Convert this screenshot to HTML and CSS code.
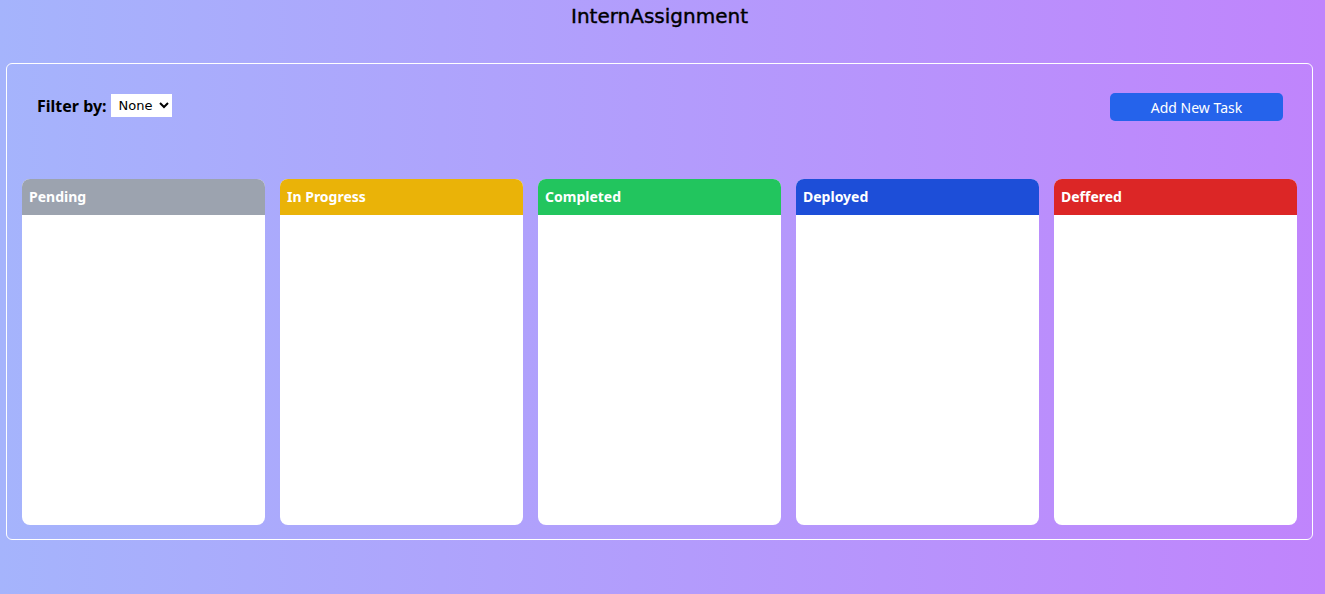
FILE: index.html
```html
<!DOCTYPE html>
<html>
<head>
<meta charset="utf-8">
<link rel="stylesheet" href="styles.css">
</head>
<body>
<h1 class="title">InternAssignment</h1>
<div class="board">
  <div class="toolbar">
    <div class="filter">
      <span class="filter-label">Filter by:</span>
      <select class="filter-select"><option>None</option></select>
    </div>
    <button class="add-btn">Add New Task</button>
  </div>
  <div class="columns">
    <div class="column"><div class="col-head pending">Pending</div><div class="col-body"></div></div>
    <div class="column"><div class="col-head progress">In Progress</div><div class="col-body"></div></div>
    <div class="column"><div class="col-head completed">Completed</div><div class="col-body"></div></div>
    <div class="column"><div class="col-head deployed">Deployed</div><div class="col-body"></div></div>
    <div class="column"><div class="col-head deferred">Deffered</div><div class="col-body"></div></div>
  </div>
</div>
</body>
</html>
```
FILE: styles.css
```css
html, body {
  margin: 0;
  height: 100%;
}
body {
  background: linear-gradient(to right, #a5b4fc, #c084fc);
  font-family: "Noto Sans", sans-serif;
  color: #111;
  overflow: hidden;
}
.title {
  margin: 0;
  padding-top: 4px;
  text-align: center;
  font-family: "DejaVu Sans", sans-serif;
  font-size: 20px;
  font-weight: normal;
  line-height: 24px;
  margin-right: 6px;
  color: #000;
  -webkit-text-stroke: 0.4px #000;
}
.board {
  margin: 35px 0 0 6px;
  width: 1307px;
  height: 477px;
  border: 1px solid #fff;
  border-radius: 6px;
  box-sizing: border-box;
  padding: 29px 15px 14px 15px;
  display: flex;
  flex-direction: column;
}
.toolbar {
  display: flex;
  justify-content: space-between;
  align-items: flex-start;
  padding: 0 14px 0 15px;
  height: 86px;
}
.filter {
  display: flex;
  align-items: center;
  gap: 4px;
  margin-top: 1px;
}
.filter-label {
  font-weight: bold;
  font-size: 16px;
  color: #000;
}
.filter-select {
  height: 23px;
  width: 61px;
  border: none;
  background: #fff;
  font-family: "DejaVu Sans", sans-serif;
  font-size: 13px;
  padding: 0 2px 0 4px;
  border-radius: 0;
}
.add-btn {
  width: 173px;
  height: 28px;
  background: #2563eb;
  color: #fff;
  border: none;
  border-radius: 5px;
  font-family: "Noto Sans", sans-serif;
  font-size: 14px;
}
.columns {
  display: flex;
  gap: 15px;
  flex: 1;
}
.column {
  width: 243px;
  flex: none;
  display: flex;
  flex-direction: column;
  border-radius: 8px;
  overflow: hidden;
  background: #fff;
}
.col-head {
  height: 36px;
  line-height: 36px;
  padding: 0 7px;
  color: #fff;
  font-weight: bold;
  font-size: 14px;
}
.col-body { flex: 1; }
.pending { background: #9ca3af; }
.progress { background: #eab308; }
.completed { background: #22c55e; }
.deployed { background: #1d4ed8; }
.deferred { background: #dc2626; }
```
